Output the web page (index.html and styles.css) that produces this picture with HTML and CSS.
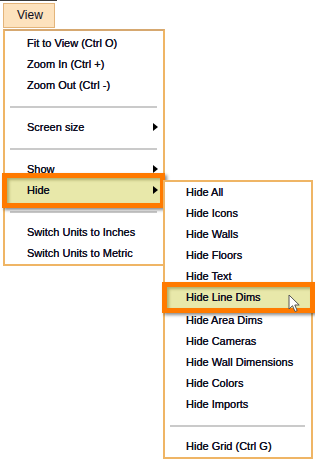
FILE: index.html
```html
<!DOCTYPE html>
<html lang="en">

<head>
    <meta charset="UTF-8">
    <meta name="viewport" content="width=device-width, initial-scale=1.0">
    <title>View menu</title>
    <link rel="stylesheet" href="styles.css">
</head>

<body>
    <div class="topline"></div>
    <div class="menubar">
        <span class="menu-btn">View</span>
    </div>

    <div class="menu main-menu">
        <div class="item">Fit to View (Ctrl O)</div>
        <div class="item">Zoom In (Ctrl +)</div>
        <div class="item">Zoom Out (Ctrl -)</div>
        <div class="sep"></div>
        <div class="item sub">Screen size</div>
        <div class="sep"></div>
        <div class="item sub">Show</div>
        <div class="item sub active">Hide</div>
        <div class="sep"></div>
        <div class="item">Switch Units to Inches</div>
        <div class="item">Switch Units to Metric</div>
    </div>

    <!-- flyout of "Hide" -->
    <div class="menu submenu">
        <div class="item">Hide All</div>
        <div class="item">Hide Icons</div>
        <div class="item">Hide Walls</div>
        <div class="item">Hide Floors</div>
        <div class="item">Hide Text</div>
        <div class="item active">Hide Line Dims</div>
        <div class="item">Hide Area Dims</div>
        <div class="item">Hide Cameras</div>
        <div class="item">Hide Wall Dimensions</div>
        <div class="item">Hide Colors</div>
        <div class="item">Hide Imports</div>
        <div class="sep"></div>
        <div class="item">Hide Grid (Ctrl G)</div>
    </div>

    <svg class="cursor" width="13" height="19" viewBox="0 0 13 19">
        <path d="M1 1 L1 15 L4.5 11.7 L7 17.5 L9.2 16.6 L6.8 11 L11.2 11 Z" fill="#fff" stroke="#555" stroke-width="1" stroke-linejoin="round"/>
    </svg>
</body>

</html>
```

FILE: styles.css
```css
body {
    margin: 0;
    width: 315px;
    height: 459px;
    overflow: hidden;
    position: relative;
    background: #fff;
    font-family: "Liberation Sans", Arial, sans-serif;
    font-size: 11px;
    color: #0c0c20;
}

.topline {
    width: 57px;
    height: 1px;
    background: #3a3a3a;
}

.menubar {
    padding: 2px 0 0 3px;
}

.menu-btn {
    display: block;
    width: 37px;
    height: 23px;
    line-height: 23px;
    padding-left: 13px;
    border: 1px solid #e3b47a;
    background: #fde2bd;
    font-size: 12px;
}

.menu {
    box-sizing: border-box;
    background: #fff;
    border: 2px solid #efb565;
}

.main-menu {
    width: 162px;
    margin: 1px 0 0 3px;
    padding-top: 2px;
    border-top-color: #d6a870;
}

.item {
    position: relative;
    height: 21px;
    line-height: 21px;
    padding-left: 22px;
    white-space: nowrap;
    text-shadow: 0 0 0.3px #0c0c20;
}

.sub::after {
    content: "";
    position: absolute;
    right: 5px;
    top: 6px;
    border-left: 5px solid #000;
    border-top: 4px solid transparent;
    border-bottom: 4px solid transparent;
}

.sep {
    height: 21px;
    display: flex;
    align-items: center;
    padding: 0 6px 0 5px;
}

.sep::after {
    content: "";
    flex: 1;
    height: 2px;
    background: #cacaca;
}

.item.active {
    height: 25px;
    line-height: 25px;
    margin: -7px -2px -7px -3px;
    padding-left: 20px;
    border: 5px solid #ff7a00;
    background: #e8e8aa;
    box-shadow: 2px 2px 3px rgba(0, 0, 0, 0.45), inset 2px 2px 3px rgba(90, 90, 20, 0.4);
    z-index: 1;
}

.item.active.sub::after {
    right: 2px;
    top: 8px;
}

.submenu {
    position: absolute;
    left: 163px;
    top: 180px;
    width: 150px;
    z-index: 2;
}

.submenu .item {
    padding-left: 21px;
}

.submenu .item.active {
    height: 21px;
    line-height: 21px;
    margin: -5px -4px -3px -3px;
    padding-left: 19px;
}

.cursor {
    position: absolute;
    left: 288px;
    top: 294px;
    z-index: 3;
}
```
